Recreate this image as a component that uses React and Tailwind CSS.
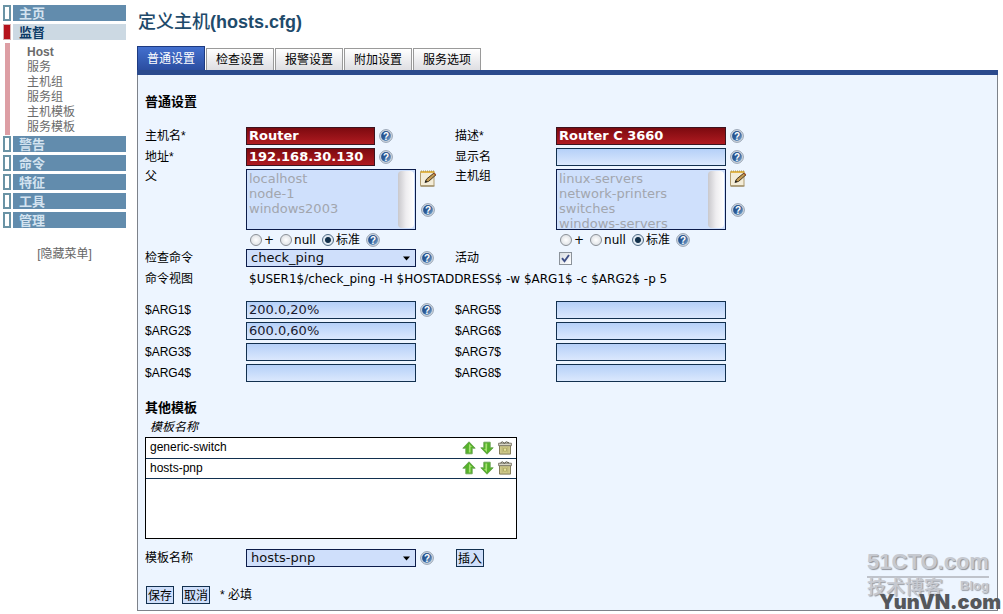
import React, { useState } from "react";

const menuTop = [
  { id: "home", label: "主页" },
  { id: "monitor", label: "监督" },
];

const menuBottom = [
  { id: "alarm", label: "警告" },
  { id: "commands", label: "命令" },
  { id: "special", label: "特征" },
  { id: "tools", label: "工具" },
  { id: "admin", label: "管理" },
];

const subMenu = ["Host", "服务", "主机组", "服务组", "主机模板", "服务模板"];

const tabs = ["普通设置", "检查设置", "报警设置", "附加设置", "服务选项"];

const HelpIcon = () => (
  <svg className="h-[14px] w-[14px] shrink-0" viewBox="0 0 14 14" aria-hidden="true">
    <defs>
      <linearGradient id="helpFill" x1="0" y1="0" x2="1" y2="1">
        <stop offset="0" stopColor="#1f4580" />
        <stop offset="0.5" stopColor="#2f5d98" />
        <stop offset="1" stopColor="#86b4d8" />
      </linearGradient>
    </defs>
    <circle cx="7" cy="7" r="6.4" fill="#d3dae2" stroke="#8e9cad" strokeWidth="0.9" />
    <circle cx="7" cy="7" r="4.9" fill="url(#helpFill)" />
    <text
      x="7"
      y="10.6"
      textAnchor="middle"
      fontSize="10"
      fontWeight="700"
      fontFamily="'Liberation Sans', sans-serif"
      fill="#ffffff"
    >
      ?
    </text>
  </svg>
);

const EditIcon = () => (
  <svg className="h-[17px] w-[17px]" viewBox="0 0 17 17" aria-hidden="true">
    <rect x="0.5" y="1.5" width="13.5" height="14.5" rx="0.5" fill="#f3ecd8" stroke="#b09c70" />
    <rect x="0.5" y="1" width="14" height="2" fill="#e2b64c" />
    <path d="M1 1h13" stroke="#94803f" strokeWidth="0.8" strokeDasharray="1 1" />
    <path d="M.5 16h14" stroke="#8d7a50" strokeWidth="1" />
    <path d="M5.2 12.2L6.6 9 14 3l2 1.8-7.4 6.6z" fill="#c49a52" stroke="#4a3a22" strokeWidth="1" />
    <path d="M4.6 12.8l1-2.6 1.9 1.7z" fill="#1d1d1d" />
    <path d="M13.8 3.2l2 1.8" stroke="#a5532f" strokeWidth="1.2" />
  </svg>
);

const ArrowIcon = ({ down }) => (
  <svg className={down ? "h-[14px] w-[14px] rotate-180" : "h-[14px] w-[14px]"} viewBox="0 0 14 14" aria-hidden="true">
    <path d="M7 .8L13.2 7.2H10.2V12.8H3.8V7.2H.8z" fill="#55b22a" stroke="#6aa352" strokeWidth="0.9" strokeLinejoin="round" />
    <path d="M7 2.8L10 6H8.6v5.4H6.8z" fill="#a5e070" />
  </svg>
);

const TrashIcon = () => (
  <svg className="h-[14px] w-[14px]" viewBox="0 0 14 14" aria-hidden="true">
    <path d="M1.5 4.5h11v8.6h-11z" fill="#cfc98a" stroke="#77714f" strokeWidth="0.9" />
    <path d="M.6 2.2h12.8v2.5H.6z" fill="#d8d6c8" stroke="#6a6655" strokeWidth="0.8" />
    <path d="M2.5 1.9L4.3.8l2 1.5L8.2.8l2.9 1.1" fill="none" stroke="#55523f" strokeWidth="1" />
    <path d="M4.2 6v5.5M9.8 6v5.5" stroke="#b5af74" strokeWidth="0.9" />
    <path d="M5.5 7.2h3v3h-3z" fill="#e6e29f" stroke="#a39d55" strokeWidth="0.7" />
  </svg>
);

const MenuItem = ({ label, active }) => (
  <a href="#" className="flex h-4 gap-[2px]">
    <span
      className={
        active
          ? "w-2 border border-[#d8b0b0] bg-[#b5121b]"
          : "w-2 border-2 border-[#6a93a5] bg-white"
      }
    />
    <span
      className={
        active
          ? "flex-1 bg-[#ccd9e3] pl-[6px] text-[13px] leading-[18px] font-bold text-[#0b3a66]"
          : "flex-1 bg-[#628cad] pl-[6px] text-[13px] leading-[18px] font-bold text-[#d3e3f0]"
      }
    >
      {label}
    </span>
  </a>
);

const TextField = ({ id, value = "", required, short, help }) => (
  <div className="flex items-center gap-1">
    <input
      id={id}
      type="text"
      defaultValue={value}
      className={
        (short ? "w-[129px] " : "w-[170px] ") +
        (required
          ? "h-[18px] border border-[#3c1420] bg-linear-to-b from-[#7d0a10] to-[#b01a20] px-[2px] font-[Verdana,'DejaVu_Sans',sans-serif] text-[13px] font-bold text-white"
          : "h-[18px] border border-[#12304f] bg-linear-to-b from-[#b5d0f8] to-[#dbe8fd] px-[2px] font-[Verdana,'DejaVu_Sans',sans-serif] text-[13px] text-[#1a1a2e]")
      }
    />
    {help && <HelpIcon />}
  </div>
);

const DropDown = ({ id, options }) => (
  <div className="flex items-center gap-1">
    <div className="relative">
      <select
        id={id}
        className="block h-[18px] w-[170px] appearance-none border border-[#0c1c4a] bg-[#cfdffb] px-1 font-[Verdana,'DejaVu_Sans',sans-serif] text-[13px] leading-4 text-[#111]"
      >
        {options.map((o) => (
          <option key={o}>{o}</option>
        ))}
      </select>
      <svg className="pointer-events-none absolute top-[7px] right-[6px] h-[5px] w-[7px]" viewBox="0 0 7 5" aria-hidden="true">
        <path d="M0 .5h7L3.5 4.5z" fill="#000" />
      </svg>
    </div>
    <HelpIcon />
  </div>
);

const ListField = ({ id, options }) => {
  const [mode, setMode] = useState("标准");

  return (
    <div className="flex flex-col">
      <div className="flex gap-1">
        <div className="flex h-[61px] w-[170px] border border-[#0c1c4a] bg-[#cfe0fc] p-px">
          <select
            id={id}
            multiple
            disabled
            className="min-w-0 flex-1 appearance-none overflow-hidden bg-transparent p-0 font-[Verdana,'DejaVu_Sans',sans-serif] text-[13px] opacity-100"
          >
            {options.map((o) => (
              <option key={o} className="h-[15px] min-h-0 p-0 pl-px text-[13px] leading-[13px] text-[#a2a6ae]">
                {o}
              </option>
            ))}
          </select>
          <span className="w-4 rounded-sm bg-linear-to-r from-[#c9c8cc] via-[#eeedf0] to-white" />
        </div>
        <div className="flex flex-col gap-4 pt-px">
          <button type="button" aria-label="编辑">
            <EditIcon />
          </button>
          <span className="pl-px">
            <HelpIcon />
          </span>
        </div>
      </div>
      <div className="flex h-4 items-center gap-[6px] pt-1 pl-1 leading-4">
        {["+", "null", "标准"].map((m) => (
          <label
            key={m}
            className="flex items-center gap-[2px] font-[Verdana,'DejaVu_Sans','Noto_Sans_CJK_SC',sans-serif] text-xs leading-4"
          >
            <input
              type="radio"
              name={id + "Mode"}
              checked={mode === m}
              onChange={() => setMode(m)}
              className="h-3 w-3 appearance-none rounded-full border border-[#8a8f96] bg-radial from-white to-[#d5d9de] checked:border-[#4f6b85] checked:bg-radial checked:from-[#12304a] checked:from-35% checked:to-[#dfe8f0] checked:to-50%"
            />
            {m}
          </label>
        ))}
        <HelpIcon />
      </div>
    </div>
  );
};

const SubmitButton = ({ children }) => (
  <button
    type="button"
    className="h-[18px] w-7 border border-[#12304f] bg-[#cfdffb] text-xs leading-[18px] text-black"
  >
    {children}
  </button>
);

const Watermark = () => (
  <div className="pointer-events-none absolute -right-1 bottom-0 flex flex-col items-end">
    <div className="mr-3 w-[122px]">
      <div className="border-b-2 border-[#bfc3cb] text-center text-[22px] leading-7 font-bold text-[#c6c9d0] [text-shadow:1px_1px_1px_#8f939b]">
        51CTO.com
      </div>
      <div className="flex items-start justify-between text-[#c6c9d0] [text-shadow:1px_1px_1px_#9a9ea6]">
        <span className="text-[19px] leading-5 font-medium">技术博客</span>
        <span className="text-[13px] leading-4 font-bold">Blog</span>
      </div>
    </div>
    <div className="-mt-1 font-[Inter,sans-serif] text-xl leading-4 font-black text-[#55585c]">
      YunVN.com
    </div>
  </div>
);

const App = () => {
  const [activeTab, setActiveTab] = useState(tabs[0]);
  const [templates, setTemplates] = useState(["generic-switch", "hosts-pnp"]);

  const moveTemplate = (from, to) => {
    if (to < 0 || to >= templates.length) return;
    const next = [...templates];
    next.splice(to, 0, next.splice(from, 1)[0]);
    setTemplates(next);
  };

  return (
    <div className="flex min-h-screen items-start gap-[11px] bg-white pr-[5px] font-['Liberation_Sans','Noto_Sans_CJK_SC',sans-serif] text-xs text-black">
      <aside className="w-[126px] shrink-0 pt-[5px] pl-[3px]">
        <nav className="flex flex-col gap-[3px]">
          {menuTop.map((item) => (
            <MenuItem key={item.id} label={item.label} active={item.id === "monitor"} />
          ))}
          <ul className="-mb-[2px] ml-[2px] border-l-5 border-[#dd9ea4] pt-[2px] pl-[17px] leading-[15px] text-[#6b6b6b]">
            {subMenu.map((s) => (
              <li key={s}>
                <a href="#" className={s === "Host" ? "font-bold" : ""}>
                  {s}
                </a>
              </li>
            ))}
          </ul>
          {menuBottom.map((item) => (
            <MenuItem key={item.id} label={item.label} />
          ))}
        </nav>
        <a href="#" className="mt-[18px] block text-center leading-4 text-[#666]">
          [隐藏菜单]
        </a>
      </aside>

      <main className="min-w-0 flex-1">
        <h1 className="py-[10px] pl-px text-lg leading-6 font-bold text-[#1f4b6b]">
          <span className="font-medium">定义主机</span>(hosts.cfg)
        </h1>

        <div role="tablist" className="mt-[2px] flex items-end gap-px border-b-5 border-[#2b4a8d]">
          {tabs.map((t) => (
            <button
              key={t}
              type="button"
              role="tab"
              aria-selected={activeTab === t}
              onClick={() => setActiveTab(t)}
              className={
                activeTab === t
                  ? "h-6 border border-b-0 border-[#1d3a80] bg-linear-to-b from-[#4370cf] to-[#2b4da0] px-[9px] leading-6 text-white"
                  : "h-[22px] border border-b-0 border-[#9a9a9a] bg-linear-to-b from-white to-[#dedee2] px-[9px] leading-[22px] text-black"
              }
            >
              {t}
            </button>
          ))}
        </div>

        <form className="relative border border-t-0 border-[#7d828a] bg-[#edf5ff] px-[7px] pt-[17px] pb-[6px]">
          <h2 className="text-[13px] leading-5 font-bold">{activeTab}</h2>

          <div className="mt-[15px] grid grid-cols-[101px_209px_101px_1fr] gap-y-[3px] leading-[18px]">
            <label htmlFor="hostName">主机名*</label>
            <TextField id="hostName" value="Router" required short help />
            <label htmlFor="description">描述*</label>
            <TextField id="description" value="Router C 3660" required help />

            <label htmlFor="address">地址*</label>
            <TextField id="address" value="192.168.30.130" required short help />
            <label htmlFor="displayName">显示名</label>
            <TextField id="displayName" help />

            <label htmlFor="parents" className="leading-[14px]">父</label>
            <ListField id="parents" options={["localhost", "node-1", "windows2003"]} />
            <label htmlFor="hostGroups" className="leading-[14px]">主机组</label>
            <ListField
              id="hostGroups"
              options={["linux-servers", "network-printers", "switches", "windows-servers"]}
            />

            <label htmlFor="checkCommand">检查命令</label>
            <DropDown id="checkCommand" options={["check_ping"]} />
            <label htmlFor="active">活动</label>
            <div className="relative flex items-center pl-[3px]">
              <input
                id="active"
                type="checkbox"
                defaultChecked
                className="peer h-[13px] w-[13px] appearance-none border border-[#8b929a] bg-linear-to-br from-[#d9dde2] to-white"
              />
              <svg className="pointer-events-none absolute left-[5px] hidden h-[9px] w-[9px] peer-checked:block" viewBox="0 0 9 9" aria-hidden="true">
                <path d="M1 4.2L3.5 7.2 8 1" fill="none" stroke="#3f4f86" strokeWidth="1.9" />
              </svg>
            </div>

            <span>命令视图</span>
            <span className="col-span-3 pl-[3px] font-[Verdana,'DejaVu_Sans',sans-serif]">
              $USER1$/check_ping -H $HOSTADDRESS$ -w $ARG1$ -c $ARG2$ -p 5
            </span>
          </div>

          <div className="mt-[13px] grid grid-cols-[101px_209px_101px_1fr] gap-y-[3px] leading-[18px]">
            <label htmlFor="arg1">$ARG1$</label>
            <TextField id="arg1" value="200.0,20%" help />
            <label htmlFor="arg5">$ARG5$</label>
            <TextField id="arg5" />

            <label htmlFor="arg2">$ARG2$</label>
            <TextField id="arg2" value="600.0,60%" />
            <label htmlFor="arg6">$ARG6$</label>
            <TextField id="arg6" />

            <label htmlFor="arg3">$ARG3$</label>
            <TextField id="arg3" />
            <label htmlFor="arg7">$ARG7$</label>
            <TextField id="arg7" />

            <label htmlFor="arg4">$ARG4$</label>
            <TextField id="arg4" />
            <label htmlFor="arg8">$ARG8$</label>
            <TextField id="arg8" />
          </div>

          <h2 className="mt-4 text-[13px] leading-5 font-bold">其他模板</h2>
          <p id="templateListTitle" className="pl-[5px] leading-[19px] italic">
            模板名称
          </p>
          <div className="h-[102px] w-[372px] border border-black bg-white">
            <table aria-labelledby="templateListTitle" className="w-full border-collapse">
              <tbody>
                {templates.map((name, i) => (
                  <tr key={name} className="h-5 border-b border-[#12304f]">
                    <td className="p-0 pl-1 leading-[19px]">{name}</td>
                    <td className="p-0 pr-1">
                      <div className="flex justify-end gap-1">
                        <button type="button" aria-label="上移" onClick={() => moveTemplate(i, i - 1)}>
                          <ArrowIcon />
                        </button>
                        <button type="button" aria-label="下移" onClick={() => moveTemplate(i, i + 1)}>
                          <ArrowIcon down />
                        </button>
                        <button
                          type="button"
                          aria-label="删除"
                          onClick={() => setTemplates(templates.filter((t) => t !== name))}
                        >
                          <TrashIcon />
                        </button>
                      </div>
                    </td>
                  </tr>
                ))}
              </tbody>
            </table>
          </div>

          <div className="mt-[10px] grid grid-cols-[101px_210px_1fr] leading-[18px]">
            <label htmlFor="template">模板名称</label>
            <DropDown id="template" options={["hosts-pnp"]} />
            <div className="flex">
              <SubmitButton>插入</SubmitButton>
            </div>
          </div>

          <div className="mt-[19px] flex items-center gap-2 pl-px leading-[18px]">
            <SubmitButton>保存</SubmitButton>
            <SubmitButton>取消</SubmitButton>
            <span className="pl-[2px]">* 必填</span>
          </div>

          <Watermark />
        </form>
      </main>
    </div>
  );
};

export default App;
